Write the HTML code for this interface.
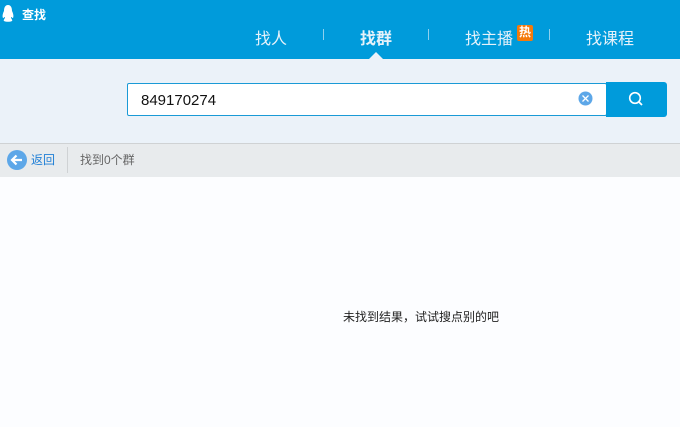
<!DOCTYPE html>
<html><head><meta charset="utf-8"><style>
*{margin:0;padding:0;box-sizing:border-box}
body{width:680px;height:427px;overflow:hidden;background:#fcfdff;font-family:"Liberation Sans","Noto Sans CJK SC",sans-serif;position:relative}
.top{position:absolute;left:0;top:0;width:680px;height:59px;background:#009bdb}
.t{position:absolute;color:#e6f2fa;font-size:16px}
.sep{position:absolute;top:29px;width:1px;height:11px;background:#8fd0ee}
.band{position:absolute;left:0;top:59px;width:680px;height:84px;background:#ebf2f9}
.inp{position:absolute;left:127px;top:83px;width:480px;height:33px;border:1px solid #1a9ad6;border-radius:2px;background:#fff;font-size:15px;color:#111;padding:8px 0 0 13px}
.btn{position:absolute;left:606px;top:82px;width:61px;height:35px;background:#009bdb;border-radius:0 3px 3px 0}
.bar{position:absolute;left:0;top:143px;width:680px;height:34px;background:#e8ebed;border-top:1px solid #cfd2d4}
</style></head><body>
<div class="top"></div>
<svg style="position:absolute;left:2px;top:5px" width="12" height="18" viewBox="0 0 12 18"><path d="M6 0C3 0 2 3 2 6C1 8 0 11 1 13C2 13 2 12 3 12C3 14 1 15 2 16C4 17 8 17 10 16C11 15 9 14 9 12C10 12 10 13 11 13C12 11 11 8 10 6C10 3 9 0 6 0Z" fill="#fff"/></svg>
<div class="t" style="left:22px;top:6px;font-size:12px;color:#fff;font-weight:bold">查找</div>
<div class="t" style="left:255px;top:25px">找人</div>
<div class="sep" style="left:323px"></div>
<div class="t" style="left:360px;top:25px;font-weight:bold">找群</div>
<svg style="position:absolute;left:369px;top:52px" width="14" height="7"><path d="M0 7L7 0L14 7Z" fill="#ebf2f9"/></svg>
<div class="sep" style="left:428px"></div>
<div class="t" style="left:465px;top:25px">找主播</div>
<div style="position:absolute;left:517px;top:25px;width:16px;height:16px;background:#f47a0c;border-radius:2px;color:#fff;font-size:12px;line-height:15px;text-align:center;font-weight:bold">热</div>
<div class="sep" style="left:549px"></div>
<div class="t" style="left:586px;top:25px">找课程</div>
<div class="band"></div>
<div class="inp">849170274</div>
<svg style="position:absolute;left:578px;top:91px" width="15" height="15"><circle cx="7.5" cy="7.5" r="7" fill="#5da7e8"/><path d="M4.5 4.5L10.5 10.5M10.5 4.5L4.5 10.5" stroke="#fff" stroke-width="1.3"/></svg>
<div class="btn"></div>
<svg style="position:absolute;left:628px;top:91px" width="16" height="16"><circle cx="7" cy="7" r="5.3" fill="none" stroke="#fff" stroke-width="1.6"/><path d="M10.5 10.5L14 14" stroke="#fff" stroke-width="1.8"/></svg>
<div class="bar"></div>
<svg style="position:absolute;left:7px;top:150px" width="20" height="20"><circle cx="10" cy="10" r="10" fill="#5da7e8"/><path d="M15 10H5M9.5 5.5L5 10L9.5 14.5" stroke="#fff" stroke-width="2.2" fill="none"/></svg>
<div style="position:absolute;left:31px;top:151px;font-size:12px;color:#1f7fd6">返回</div>
<div style="position:absolute;left:67px;top:147px;width:1px;height:26px;background:#cfd2d4"></div>
<div style="position:absolute;left:80px;top:151px;font-size:12px;color:#666">找到0个群</div>
<div style="position:absolute;left:343px;top:308px;font-size:12px;color:#222">未找到结果，试试搜点别的吧</div>
</body></html>
